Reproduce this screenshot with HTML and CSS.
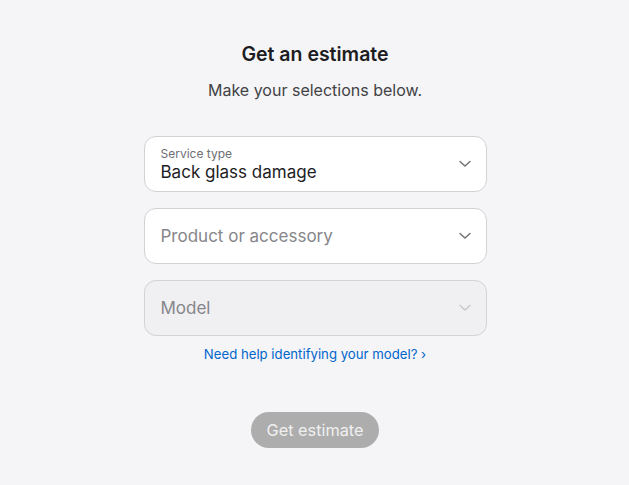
FILE: index.html
```html
<!DOCTYPE html>
<html lang="en">
<head>
    <meta charset="UTF-8">
    <meta name="viewport" content="width=device-width, initial-scale=1.0">
    <title>Get an estimate</title>
    <link rel="stylesheet" href="styles.css">
</head>
<body>
    <main class="estimate">
        <h1 class="estimate-title">Get an estimate</h1>
        <p class="estimate-sub">Make your selections below.</p>

        <div class="fields">
            <div class="field">
                <div class="field-text">
                    <span class="field-label">Service type</span>
                    <span class="field-value">Back glass damage</span>
                </div>
                <svg class="chevron" width="12" height="8" viewBox="0 0 12 8"><path d="M1 1.5l5 4.5 5-4.5" fill="none" stroke="#6e6e73" stroke-width="1.4" stroke-linecap="round" stroke-linejoin="round"/></svg>
            </div>
            <div class="field">
                <div class="field-text">
                    <span class="field-placeholder">Product or accessory</span>
                </div>
                <svg class="chevron" width="12" height="8" viewBox="0 0 12 8"><path d="M1 1.5l5 4.5 5-4.5" fill="none" stroke="#6e6e73" stroke-width="1.4" stroke-linecap="round" stroke-linejoin="round"/></svg>
            </div>
            <div class="field field-disabled">
                <div class="field-text">
                    <span class="field-placeholder">Model</span>
                </div>
                <svg class="chevron" width="12" height="8" viewBox="0 0 12 8"><path d="M1 1.5l5 4.5 5-4.5" fill="none" stroke="#c7c7cc" stroke-width="1.4" stroke-linecap="round" stroke-linejoin="round"/></svg>
            </div>
        </div>

        <a class="help-link" href="#">Need help identifying your model? &rsaquo;</a>

        <button class="btn-estimate" type="button" disabled>Get estimate</button>
    </main>
</body>
</html>
```

FILE: styles.css
```css
body {
    font-family: Inter, "Noto Sans", sans-serif;
    margin: 0;
    padding: 0;
    background-color: #f5f5f7;
    color: #1d1d1f;
}

.estimate {
    width: 343px;
    margin: 0 auto;
    padding: 41px 0 0 1px;
    display: flex;
    flex-direction: column;
    align-items: center;
}

.estimate-title {
    margin: 0;
    font-size: 19.5px;
    font-weight: 600;
    line-height: 26px;
}

.estimate-sub {
    margin: 11px 0 0;
    font-size: 16px;
    line-height: 24px;
    color: #424245;
}

.fields {
    width: 100%;
    margin-top: 34px;
    display: flex;
    flex-direction: column;
    gap: 16px;
}

.field {
    box-sizing: border-box;
    height: 56px;
    padding: 0 15px 0 16px;
    background: #fff;
    border: 1px solid #d2d2d7;
    border-radius: 12px;
    display: flex;
    align-items: center;
    justify-content: space-between;
}

.field-disabled {
    background: #f0f0f2;
}

.field-text {
    display: flex;
    flex-direction: column;
}

.field-label {
    font-size: 12px;
    line-height: 14px;
    color: #6e6e73;
    margin-top: 2px;
}

.field-value {
    font-size: 17px;
    line-height: 22px;
}

.field-placeholder {
    font-size: 17px;
    line-height: 22px;
    color: #86868b;
}

.help-link {
    margin-top: 8px;
    font-size: 13.2px;
    line-height: 20px;
    color: #0066cc;
    text-decoration: none;
}

.btn-estimate {
    margin-top: 48px;
    height: 36px;
    padding: 0 16px;
    border: none;
    border-radius: 18px;
    background: #adadad;
    color: #f0f0f0;
    font-family: inherit;
    font-size: 16.3px;
}
```
